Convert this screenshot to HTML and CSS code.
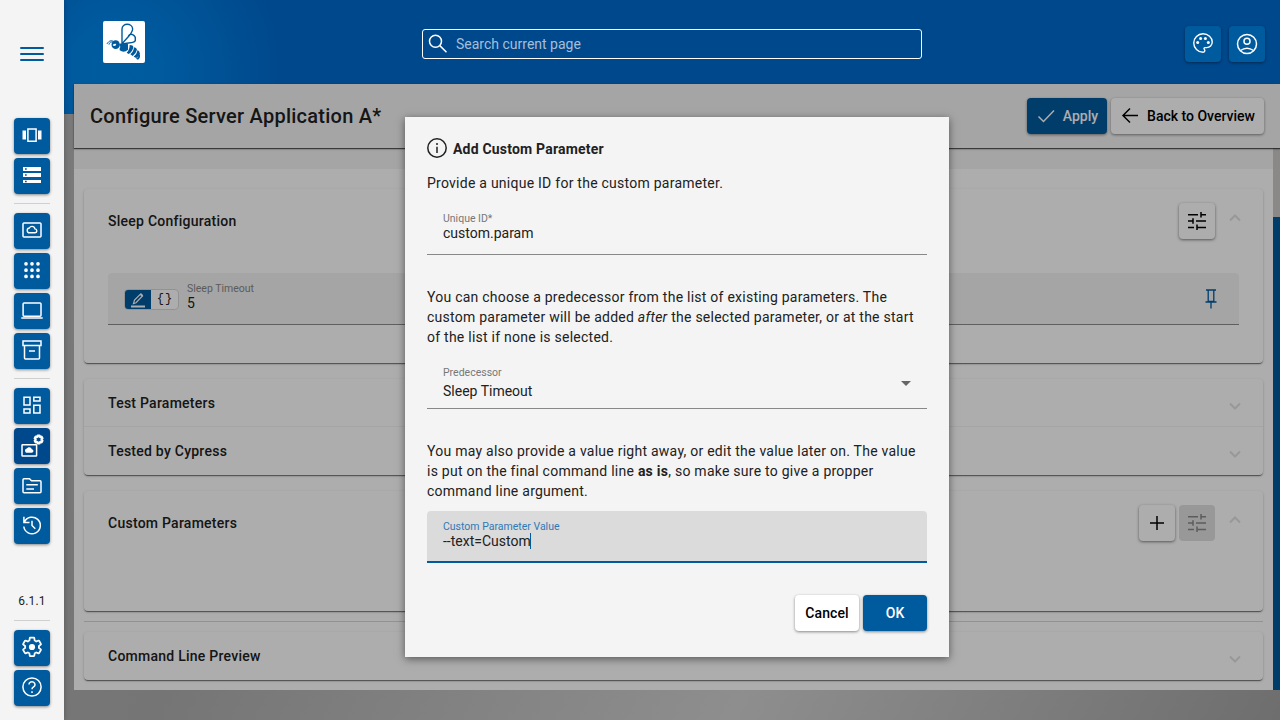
FILE: index.html
```html
<!DOCTYPE html>
<html lang="en">
<head>
<meta charset="utf-8">
<title>Configure Server Application</title>
<link rel="stylesheet" href="styles.css">
</head>
<body>
<svg class="defs" width="0" height="0">
  <defs>
    <path id="gear" d="M19.43 12.98c.04-.32.07-.64.07-.98 0-.34-.03-.66-.07-.98l2.11-1.65c.19-.15.24-.42.12-.64l-2-3.46c-.09-.16-.26-.25-.44-.25-.06 0-.12.01-.17.03l-2.49 1c-.52-.4-1.08-.73-1.69-.98l-.38-2.65C14.46 2.18 14.25 2 14 2h-4c-.25 0-.46.18-.49.42l-.38 2.65c-.61.25-1.17.59-1.69.98l-2.49-1c-.06-.02-.12-.03-.18-.03-.17 0-.34.09-.43.25l-2 3.46c-.13.22-.07.49.12.64l2.11 1.65c-.04.32-.07.65-.07.98 0 .33.03.66.07.98l-2.11 1.65c-.19.15-.24.42-.12.64l2 3.46c.09.16.26.25.44.25.06 0 .12-.01.17-.03l2.49-1c.52.4 1.08.73 1.69.98l.38 2.65c.03.24.24.42.49.42h4c.25 0 .46-.18.49-.42l.38-2.65c.61-.25 1.17-.59 1.69-.98l2.49 1c.06.02.12.03.18.03.17 0 .34-.09.43-.25l2-3.46c.12-.22.07-.49-.12-.64l-2.11-1.65z"/>
    <path id="cloud" d="M19.35 10.04C18.67 6.59 15.64 4 12 4 9.11 4 6.6 5.64 5.35 8.04 2.34 8.36 0 10.91 0 14c0 3.31 2.69 6 6 6h13c2.76 0 5-2.24 5-5 0-2.64-2.05-4.78-4.65-4.96z"/>
    <path id="tune" d="M3 5.7h10M16 3v5.5M16 5.7h5M3 12h5M8 9.3v5.4M11 12h10M3 18.4h6M12 15.6v5.4M12 18.4h9"/>
  </defs>
</svg>
<div class="app">
  <nav class="sidebar">
    <div class="menu"><i></i><i></i><i></i></div>
    <div class="group">
      <button class="nav"><svg class="icon" viewBox="0 0 24 24"><path class="fill" d="M2.5 7.5H6v9H2.5zM18 7.5h3.5v9H18z"/><path d="M7.9 5.9h8.2v12.3H7.9z"/></svg></button>
      <button class="nav"><svg class="icon" viewBox="0 0 24 24"><path class="fill" fill-rule="evenodd" d="M3 4h18v4H3zM5 5.2v1.6h1.7V5.2zM3 10h18v4H3zM5 11.2v1.6h1.7v-1.6zM3 17h18v3H3zM5 17.8v1.4h1.7v-1.4z"/></svg></button>
    </div>
    <div class="group">
      <button class="nav"><svg class="icon" viewBox="0 0 24 24"><rect x="3" y="5" width="18" height="14" rx="1"/><use href="#cloud" transform="translate(7.2 6.8) scale(.4)" stroke-width="3.4"/></svg></button>
      <button class="nav"><svg class="icon dots" viewBox="0 0 24 24"><path d="M6 5.8h0M12 5.8h0M18 5.8h0M6 12.2h0M12 12.2h0M18 12.2h0M6 18.4h0M12 18.4h0M18 18.4h0"/></svg></button>
      <button class="nav"><svg class="icon" viewBox="0 0 24 24"><rect x="3.1" y="5" width="17.9" height="13.2" rx="1"/><path d="M1.3 20h21.4"/></svg></button>
      <button class="nav"><svg class="icon" viewBox="0 0 24 24"><path d="M3 3h18v4.5H3zM4.5 7.5V20q0 1 1 1h13q1 0 1-1V7.5M9 13h6"/></svg></button>
    </div>
    <div class="group">
      <button class="nav"><svg class="icon" viewBox="0 0 24 24"><path d="M4 4.3h6v7.6H4zM13.8 4.3h6.2v3.8h-6.2zM4 16h6v4H4zM13.8 12.3h6.2V20h-6.2z"/></svg></button>
      <button class="nav active"><svg class="icon" viewBox="0 0 24 24"><rect x="2" y="11.7" width="14.6" height="11.3" rx=".6"/><use class="fill" href="#cloud" transform="translate(5 12.8) scale(.35)"/><use href="#gear" transform="translate(13.8 1.7) scale(.4)" stroke-width="5.5"/></svg></button>
      <button class="nav"><svg class="icon" viewBox="0 0 24 24"><path d="M3 18.7V6.8q0-1 1-1h5.5l2 2H20q1 0 1 1v9.900q0 1-1 1H4q-1 0-1-1zM6.300 11.700h11.500M6.300 15.900h7.700"/></svg></button>
      <button class="nav"><svg class="icon" viewBox="0 0 24 24"><path d="M4.400 9.200a8.300 8.300 0 1 1-.6 4.300M3.900 3.800v5.600h5.600M12 7.700v4.800l3.300 3.300"/></svg></button>
    </div>
    <div class="foot">
      <div class="version">6.1.1</div>
      <div class="group">
        <button class="nav"><svg class="icon" viewBox="0 0 24 24"><use href="#gear" transform="translate(1 .9) scale(.92)" stroke-width="1.9"/><circle class="fill" cx="12" cy="12" r="3.1"/></svg></button>
        <button class="nav"><svg class="icon" viewBox="0 0 24 24"><circle cx="12" cy="12" r="9.1"/><path d="M9 9.600a3 2.800 0 1 1 4.600 2.300q-1.600 1-1.600 2.400M12 16.300v1.800"/></svg></button>
      </div>
    </div>
  </nav>
  <div class="body">
    <header class="banner">
      <div class="logo">
        <svg viewBox="0 0 126 126"><g fill="none" stroke="#005a9e" stroke-width="4.2"><path d="M57 68V24C57 5 88 5 89 24 88 40 70 51 58 68M76 45C84 34 99 43 97 55 99 69 72 64 61 69"/><path stroke-width="3" d="M31 61C22 56 15 63 12 69M32 65C22 60 19 66 18 71"/></g><g fill="#005a9e"><ellipse cx="38" cy="71" rx="12.500" ry="13"/><path d="M49 69Q62 62 75 70L75 86Q63 97 50 88Q49 81 52 78Z"/><path d="M80 72Q91 72 91 79Q89 92 77 99L71 95Q80 87 80 72ZM93 79Q101 80 102 86Q99 98 89 105L82 100Q92 92 93 79ZM104 87Q110 91 111 98Q108 107 100 111L92 107Q102 99 104 87ZM110 99Q114 110 105 116L99 113Q107 108 110 99Z"/></g><path d="M29 72q5-6 11-3-1 6-6 6-4 0-5-3z" fill="#fff"/></svg>
      </div>
      <div class="search"><svg class="icon" viewBox="0 0 24 24"><circle cx="9.500" cy="9.300" r="6"/><path d="M13.800 13.600l6.700 6.700"/></svg><span>Search current page</span></div>
      <div class="tools">
        <button class="nav"><svg class="icon" viewBox="0 0 24 24"><path transform="translate(.9 .9) scale(.925)" d="M12 22C6.49 22 2 17.51 2 12S6.49 2 12 2s10 4.04 10 9c0 3.310-2.690 6-6 6h-1.770c-1 0-1.500.8-.9 1.600.6.8.67 1.200.67 1.900 0 .9-.8 1.500-2 1.500z"/><g class="fill"><circle cx="6.700" cy="11.500" r="1.500"/><circle cx="9.600" cy="7.600" r="1.500"/><circle cx="14.400" cy="7.600" r="1.500"/><circle cx="17.300" cy="11.500" r="1.500"/></g></svg></button>
        <button class="nav user"><svg class="icon" viewBox="0 0 24 24"><circle cx="12" cy="12" r="9.500"/><circle cx="12" cy="9.300" r="3"/><path d="M5.500 18.500q6.500-4.700 13 0"/></svg></button>
      </div>
    </header>
    <main class="main">
      <div class="toolbar">
        <h1>Configure Server Application A*</h1>
        <button class="btn primary"><svg class="icon" viewBox="0 0 24 24"><path d="M4.500 12.500l5 5L20 6.500"/></svg>Apply</button>
        <button class="btn back"><svg class="icon" viewBox="0 0 24 24"><path d="M20 11.500H5M12 4.500l-7 7 7 7"/></svg>Back to Overview</button>
      </div>
      <div class="scroller">
        <div class="content">
          <section class="card sleep">
            <div class="head"><h2>Sleep Configuration</h2><button class="square"><svg class="icon" viewBox="0 0 24 24"><use href="#tune"/></svg></button><svg class="chev" viewBox="0 0 12 8"><path d="M1 6.500l5-5 5 5"/></svg></div>
            <div class="param">
              <div class="toggle"><b><svg viewBox="0 0 26 20"><path fill="none" stroke="#fff" stroke-width="1.200" d="M8.500 13.500l1-3.500L15.500 4l2 2-6.500 6.700z"/><path stroke="#fff" stroke-width="2" d="M6 16.500h14M15.500 4l2 2"/></svg></b><em>{}</em></div>
              <div class="pair"><small>Sleep Timeout</small><span>5</span></div>
              <svg class="pin" viewBox="0 0 12 20"><path d="M1 1h10M3.200 1v11.500M8.800 1v11.500M3 12.500h6M.5 13h11M6 13v6.500"/></svg>
            </div>
          </section>
          <section class="card stack">
            <div class="head"><h2>Test Parameters</h2><svg class="chev" viewBox="0 0 12 8"><path d="M1 1.500l5 5 5-5"/></svg></div>
            <div class="head"><h2>Tested by Cypress</h2><svg class="chev" viewBox="0 0 12 8"><path d="M1 1.500l5 5 5-5"/></svg></div>
          </section>
          <section class="card custom">
            <div class="head"><h2>Custom Parameters</h2><button class="square"><svg class="icon" viewBox="0 0 24 24"><path d="M12 5v14M5 12h14"/></svg></button><button class="square disabled"><svg class="icon" viewBox="0 0 24 24"><use href="#tune"/></svg></button><svg class="chev" viewBox="0 0 12 8"><path d="M1 6.500l5-5 5 5"/></svg></div>
          </section>
          <hr>
          <section class="card preview">
            <div class="head"><h2>Command Line Preview</h2><svg class="chev" viewBox="0 0 12 8"><path d="M1 1.500l5 5 5-5"/></svg></div>
          </section>
        </div>
        <div class="track"><div class="thumb"></div></div>
      </div>
      <div class="scrim"></div>
    </main>
  </div>
  <div class="dialog">
    <div class="title"><svg class="icon" viewBox="0 0 24 24"><circle cx="12" cy="12" r="9.200"/><path d="M12 10.800v6.200M12 7v1.900"/></svg><span>Add Custom Parameter</span></div>
    <p>Provide a unique ID for the custom parameter.</p>
    <div class="field"><small>Unique ID*</small><span>custom.param</span></div>
    <p>You can choose a predecessor from the list of existing parameters. The custom parameter will be added <em>after</em> the selected parameter, or at the start of the list if none is selected.</p>
    <div class="field select"><small>Predecessor</small><span>Sleep Timeout</span><i class="arrow"></i></div>
    <p>You may also provide a value right away, or edit the value later on. The value is put on the final command line <b>as is</b>, so make sure to give a propper command line argument.</p>
    <div class="field focused"><small>Custom Parameter Value</small><span>--text=Custom<i class="caret"></i></span></div>
    <div class="actions"><button class="btn cancel">Cancel</button><button class="btn primary ok">OK</button></div>
  </div>
</div>
</body>
</html>
```
FILE: styles.css
```css
* { box-sizing: border-box; }
body { margin: 0; font: 14px/20px Roboto, sans-serif; color: #212121; }
h1, h2, p { margin: 0; }
button { font: inherit; border: 0; padding: 0; display: flex; align-items: center; justify-content: center; }
.defs { position: absolute; }
.icon { width: 24px; height: 24px; flex: none; fill: none; stroke: currentColor; stroke-width: 1.5; overflow: visible; }
.fill { fill: currentColor; stroke: none; }
.app { position: relative; width: 1280px; height: 720px; display: flex; overflow: hidden; background: linear-gradient(115deg, #7c7c7c 0%, #757575 30%, #8e8e8e 66%, #6e6e6e 100%); }

.sidebar { width: 64px; flex: none; background: #f4f4f4; padding: 47px 14px 14px; display: flex; flex-direction: column; box-shadow: 0 0 6px rgba(0,0,0,.25); z-index: 1; }
.menu { width: 24px; height: 14px; margin: 0 auto 57px 6px; display: flex; flex-direction: column; justify-content: space-between; }
.menu i { height: 2px; background: #005a9e; border-radius: 1px; }
.group { display: flex; flex-direction: column; gap: 4px; }
.group + .group { border-top: 1px solid #d0d0d0; margin-top: 9px; padding-top: 9px; }
.nav { width: 36px; height: 36px; border-radius: 4px; background: #005a9e; color: #fff; padding-bottom: 2px; box-shadow: 0 1px 3px rgba(0,0,0,.45); }
.nav.active { background: #00488c; }
.dots { stroke-width: 3.7; stroke-linecap: round; }
.foot { margin-top: auto; }
.version { height: 29px; font-size: 12px; letter-spacing: .2px; text-align: center; }
.foot .group { border-top: 1px solid #d0d0d0; padding-top: 9px; }

.body { flex: 1; min-width: 0; display: flex; flex-direction: column; background: radial-gradient(circle at 52px 68px, #005c9f, #005a9e 45px, #00488c 165px) 0 0 / 100% 114px no-repeat; }
.banner { height: 84px; display: flex; align-items: center; padding: 0 15px 0 39px; }
.logo { width: 42px; height: 42px; background: #fff; border-radius: 2px; }
.logo svg { display: block; }
.search { width: 500px; height: 30px; margin: 4px auto 0 277px; border: 1px solid #fff; border-radius: 3px; color: #fff; display: flex; align-items: center; padding-left: 3px; gap: 6px; }
.search span { color: #a5bfd9; }
.tools { display: flex; gap: 8px; padding-top: 4px; }
.nav.user { padding-bottom: 0; }

.main { position: relative; height: 606px; margin-left: 10px; display: flex; flex-direction: column; background: #fff; }
.toolbar { height: 64px; background: #f4f4f4; display: flex; align-items: center; gap: 4px; padding: 0 16px; box-shadow: 0 1px 1px rgba(0,0,0,.6), 0 1px 3px rgba(0,0,0,.2); z-index: 1; flex: none; }
h1 { flex: 1; font-size: 20px; font-weight: 500; letter-spacing: .25px; }
.btn { height: 36px; border-radius: 4px; background: #fff; color: #000; font-weight: 500; box-shadow: 0 1px 3px rgba(0,0,0,.45); }
.btn.primary { background: #005a9e; color: #fff; }
.toolbar .primary { width: 80px; gap: 5px; padding-right: 2px; }
.back { width: 153px; gap: 5px; padding-right: 2px; }
.scroller { flex: 1; display: flex; min-height: 0; }
.content { flex: 1; padding: 41px 10px 0; background: linear-gradient(#f4f4f4 21px, #fff 21px); display: flex; flex-direction: column; }
.card { border-radius: 4px; background: #fff; box-shadow: 0 2px 1px -1px rgba(0,0,0,.35), 0 1px 1px rgba(0,0,0,.2), 0 1px 3px rgba(0,0,0,.18); padding: 0 24px; flex: none; }
.sleep { height: 174px; }
.stack { height: 96px; margin: 16px 0; }
.custom { height: 120px; }
.content hr { width: 100%; border: 0; height: 1px; background: #d8d8d8; margin: 10px 0; }
.preview { height: 48px; }
.head { height: 64px; display: flex; align-items: center; gap: 4px; }
.stack .head, .preview .head { height: 48px; }
.stack .head + .head { margin: 0 -24px; padding: 0 24px; box-shadow: 0 -1px 0 #f4f4f4; }
h2 { flex: 1; font-size: 14px; font-weight: 500; letter-spacing: .25px; }
.square { width: 36px; height: 36px; border-radius: 4px; color: #000; background: #fff; box-shadow: 0 1px 3px rgba(0,0,0,.5); padding-bottom: 1px; }
.disabled { background: #e0e0e0; color: #888; box-shadow: none; }
.chev { width: 12px; height: 8px; margin: -6px -2px 0 10px; fill: none; stroke: #e0e0e0; stroke-width: 2; }
.stack .chev, .preview .chev { margin-top: 6px; }
.param { height: 52px; margin-top: 20px; background: #f4f4f4; border-bottom: 1px solid #8c8c8c; border-radius: 4px 4px 0 0; display: flex; align-items: center; padding: 0 22px 0 16px; }
.toggle { width: 55px; height: 21px; border: 1px solid #d8d8d8; border-radius: 4px; background: #fff; display: flex; overflow: hidden; margin-top: 1px; }
.toggle b { width: 26px; background: #005a9e; }
.toggle svg { display: block; }
.toggle em { flex: 1; font: 12px/19px "Liberation Mono", monospace; text-align: center; letter-spacing: 1px; padding-left: 1px; }
.pair { flex: 1; margin: -3px 0 0 8px; display: flex; flex-direction: column; }
.pair small { font-size: 10.5px; line-height: 13px; color: #888; }
.pair span { line-height: 17px; }
.pin { width: 12px; height: 20px; fill: none; stroke: #005a9e; stroke-width: 1.3; margin-bottom: 0; }
.track { width: 7px; background: #cccbc8; padding-top: 69px; }
.thumb { height: 473px; background: #005a9e; }
.scrim { position: absolute; inset: 0; background: rgba(0,0,0,.32); z-index: 2; }

.dialog { position: absolute; left: 405px; top: 117px; width: 544px; height: 540px; background: #f4f4f4; padding: 19px 22px; z-index: 3; box-shadow: 0 2px 8px rgba(0,0,0,.5); }
.title { height: 24px; display: flex; align-items: center; gap: 4px; margin: 0 0 13px -2px; font-weight: 700; letter-spacing: .2px; }
.title span { padding-top: 2px; }
.dialog p { letter-spacing: .25px; margin-bottom: 10px; }
.field { position: relative; height: 52px; border-bottom: 1px solid #888; padding: 10px 16px 0; margin-bottom: 32px; display: flex; flex-direction: column; }
.field small { font-size: 10.5px; line-height: 12px; color: #777; }
.field span { line-height: 18px; margin-top: -1px; }
.select span { margin-top: 3px; }
.arrow { position: absolute; right: 16px; top: 24px; border: 5px solid transparent; border-top-color: #666; border-bottom: 0; }
.focused { background: #dbdbdb; border-bottom: 2px solid #005a9e; border-radius: 4px 4px 0 0; }
.focused small { color: #3079b5; }
.caret { display: inline-block; width: 1px; height: 16px; background: #005a9e; vertical-align: -3px; margin-left: -1px; }
.actions { display: flex; justify-content: flex-end; gap: 4px; }
.actions .btn { width: 64px; letter-spacing: .1px; }
```
